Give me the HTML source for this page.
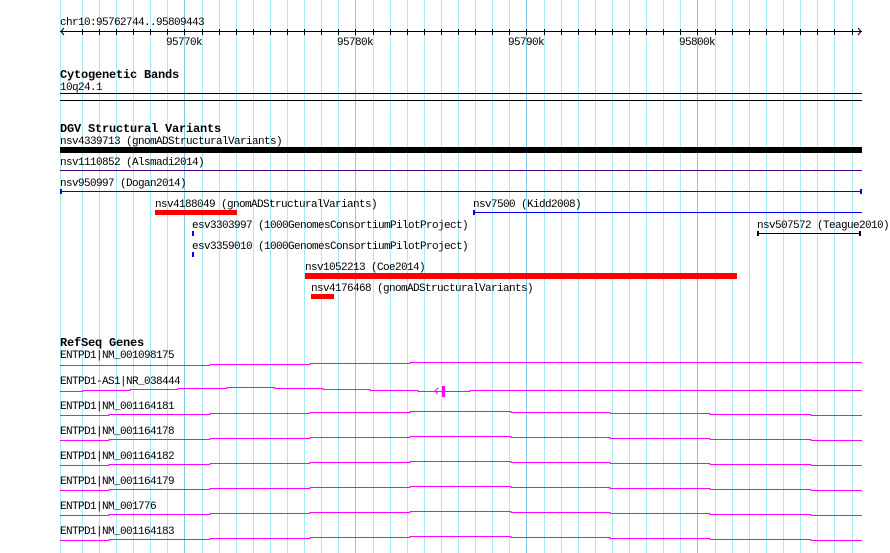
<!DOCTYPE html>
<html><head><meta charset="utf-8"><style>
html,body{margin:0;padding:0;background:#fff;width:890px;height:553px;overflow:hidden}
svg{display:block}
text{font-family:"Liberation Mono",monospace;font-size:11px;letter-spacing:-0.6px;fill:#000}
.b{font-weight:bold;font-size:12px;letter-spacing:-0.2px}
</style></head><body>
<svg width="890" height="553" viewBox="0 0 890 553" xmlns="http://www.w3.org/2000/svg">
<g stroke="#a6ecf0" stroke-width="1" shape-rendering="crispEdges">
<line x1="60.5" y1="0" x2="60.5" y2="553"/>
<line x1="82.5" y1="0" x2="82.5" y2="553"/><line x1="99.5" y1="0" x2="99.5" y2="553"/><line x1="116.5" y1="0" x2="116.5" y2="553"/><line x1="133.5" y1="0" x2="133.5" y2="553"/><line x1="150.5" y1="0" x2="150.5" y2="553"/><line x1="167.5" y1="0" x2="167.5" y2="553"/>
<line x1="202.5" y1="0" x2="202.5" y2="553"/><line x1="219.5" y1="0" x2="219.5" y2="553"/><line x1="236.5" y1="0" x2="236.5" y2="553"/><line x1="253.5" y1="0" x2="253.5" y2="553"/><line x1="270.5" y1="0" x2="270.5" y2="553"/><line x1="287.5" y1="0" x2="287.5" y2="553"/><line x1="304.5" y1="0" x2="304.5" y2="553"/><line x1="321.5" y1="0" x2="321.5" y2="553"/><line x1="338.5" y1="0" x2="338.5" y2="553"/>
<line x1="373.5" y1="0" x2="373.5" y2="553"/><line x1="390.5" y1="0" x2="390.5" y2="553"/><line x1="407.5" y1="0" x2="407.5" y2="553"/><line x1="424.5" y1="0" x2="424.5" y2="553"/><line x1="441.5" y1="0" x2="441.5" y2="553"/><line x1="458.5" y1="0" x2="458.5" y2="553"/><line x1="475.5" y1="0" x2="475.5" y2="553"/><line x1="492.5" y1="0" x2="492.5" y2="553"/><line x1="509.5" y1="0" x2="509.5" y2="553"/>
<line x1="544.5" y1="0" x2="544.5" y2="553"/><line x1="561.5" y1="0" x2="561.5" y2="553"/><line x1="578.5" y1="0" x2="578.5" y2="553"/><line x1="595.5" y1="0" x2="595.5" y2="553"/><line x1="612.5" y1="0" x2="612.5" y2="553"/><line x1="629.5" y1="0" x2="629.5" y2="553"/><line x1="646.5" y1="0" x2="646.5" y2="553"/><line x1="663.5" y1="0" x2="663.5" y2="553"/><line x1="680.5" y1="0" x2="680.5" y2="553"/>
<line x1="715.5" y1="0" x2="715.5" y2="553"/><line x1="732.5" y1="0" x2="732.5" y2="553"/><line x1="749.5" y1="0" x2="749.5" y2="553"/><line x1="766.5" y1="0" x2="766.5" y2="553"/><line x1="783.5" y1="0" x2="783.5" y2="553"/><line x1="800.5" y1="0" x2="800.5" y2="553"/><line x1="817.5" y1="0" x2="817.5" y2="553"/><line x1="834.5" y1="0" x2="834.5" y2="553"/><line x1="852.5" y1="0" x2="852.5" y2="553"/>
</g>
<g stroke="#80c8f0" stroke-width="1" shape-rendering="crispEdges">
<line x1="184.5" y1="0" x2="184.5" y2="553"/><line x1="355.5" y1="0" x2="355.5" y2="553"/><line x1="526.5" y1="0" x2="526.5" y2="553"/><line x1="697.5" y1="0" x2="697.5" y2="553"/>
</g>
<text x="60" y="25">chr10:95762744..95809443</text>
<g stroke="#000" shape-rendering="crispEdges">
<line x1="60" y1="31.5" x2="862" y2="31.5"/>
<line x1="82.5" y1="29" x2="82.5" y2="35"/><line x1="99.5" y1="29" x2="99.5" y2="35"/><line x1="116.5" y1="29" x2="116.5" y2="35"/><line x1="133.5" y1="29" x2="133.5" y2="35"/><line x1="150.5" y1="29" x2="150.5" y2="35"/><line x1="167.5" y1="29" x2="167.5" y2="35"/><line x1="184.5" y1="29" x2="184.5" y2="35"/><line x1="202.5" y1="29" x2="202.5" y2="35"/><line x1="219.5" y1="29" x2="219.5" y2="35"/><line x1="236.5" y1="29" x2="236.5" y2="35"/><line x1="253.5" y1="29" x2="253.5" y2="35"/><line x1="270.5" y1="29" x2="270.5" y2="35"/><line x1="287.5" y1="29" x2="287.5" y2="35"/><line x1="304.5" y1="29" x2="304.5" y2="35"/><line x1="321.5" y1="29" x2="321.5" y2="35"/><line x1="338.5" y1="29" x2="338.5" y2="35"/><line x1="355.5" y1="29" x2="355.5" y2="35"/><line x1="373.5" y1="29" x2="373.5" y2="35"/><line x1="390.5" y1="29" x2="390.5" y2="35"/><line x1="407.5" y1="29" x2="407.5" y2="35"/><line x1="424.5" y1="29" x2="424.5" y2="35"/><line x1="441.5" y1="29" x2="441.5" y2="35"/><line x1="458.5" y1="29" x2="458.5" y2="35"/><line x1="475.5" y1="29" x2="475.5" y2="35"/><line x1="492.5" y1="29" x2="492.5" y2="35"/><line x1="509.5" y1="29" x2="509.5" y2="35"/><line x1="526.5" y1="29" x2="526.5" y2="35"/><line x1="544.5" y1="29" x2="544.5" y2="35"/><line x1="561.5" y1="29" x2="561.5" y2="35"/><line x1="578.5" y1="29" x2="578.5" y2="35"/><line x1="595.5" y1="29" x2="595.5" y2="35"/><line x1="612.5" y1="29" x2="612.5" y2="35"/><line x1="629.5" y1="29" x2="629.5" y2="35"/><line x1="646.5" y1="29" x2="646.5" y2="35"/><line x1="663.5" y1="29" x2="663.5" y2="35"/><line x1="680.5" y1="29" x2="680.5" y2="35"/><line x1="697.5" y1="29" x2="697.5" y2="35"/><line x1="715.5" y1="29" x2="715.5" y2="35"/><line x1="732.5" y1="29" x2="732.5" y2="35"/><line x1="749.5" y1="29" x2="749.5" y2="35"/><line x1="766.5" y1="29" x2="766.5" y2="35"/><line x1="783.5" y1="29" x2="783.5" y2="35"/><line x1="800.5" y1="29" x2="800.5" y2="35"/><line x1="817.5" y1="29" x2="817.5" y2="35"/><line x1="834.5" y1="29" x2="834.5" y2="35"/><line x1="852.5" y1="29" x2="852.5" y2="35"/>
</g>
<polyline points="64,28 61,31.5 64,35" fill="none" stroke="#000"/>
<polyline points="858,28 861,31.5 858,35" fill="none" stroke="#000"/>
<text x="166" y="45">95770k</text><text x="337" y="45">95780k</text><text x="508" y="45">95790k</text><text x="679" y="45">95800k</text>
<text class="b" x="60" y="78">Cytogenetic Bands</text>
<text x="60" y="90">10q24.1</text>
<rect x="60" y="93" width="802" height="1" fill="#000"/>
<rect x="60" y="100" width="802" height="1" fill="#000"/>
<text class="b" x="60" y="132">DGV Structural Variants</text>
<text x="60" y="144">nsv4339713 (gnomADStructuralVariants)</text>
<rect x="60" y="147" width="802" height="6" fill="#000"/>
<text x="60" y="165">nsv1110852 (Alsmadi2014)</text>
<rect x="60" y="170" width="802" height="1" fill="#4b0082"/>
<text x="60" y="186">nsv950997 (Dogan2014)</text>
<rect x="60" y="191" width="802" height="1" fill="#0000ff"/>
<rect x="60" y="189" width="2" height="5" fill="#0000ff"/><rect x="860" y="189" width="2" height="5" fill="#0000ff"/>
<text x="155" y="207">nsv4188049 (gnomADStructuralVariants)</text>
<rect x="155" y="210" width="82" height="5" fill="#ff0000"/>
<text x="473" y="207">nsv7500 (Kidd2008)</text>
<rect x="473" y="212" width="389" height="1" fill="#0000ff"/>
<rect x="473" y="210" width="2" height="5" fill="#0000ff"/>
<text x="192" y="228">esv3303997 (1000GenomesConsortiumPilotProject)</text>
<rect x="192" y="231" width="2" height="5" fill="#0000ff"/>
<text x="757" y="228">nsv507572 (Teague2010)</text>
<rect x="757" y="233" width="104" height="1" fill="#000"/>
<rect x="757" y="231" width="2" height="5" fill="#000"/><rect x="859" y="231" width="2" height="5" fill="#000"/>
<text x="192" y="249">esv3359010 (1000GenomesConsortiumPilotProject)</text>
<rect x="192" y="252" width="2" height="5" fill="#0000ff"/>
<text x="305" y="270">nsv1052213 (Coe2014)</text>
<rect x="305" y="273" width="432" height="6" fill="#ff0000"/>
<text x="311" y="291">nsv4176468 (gnomADStructuralVariants)</text>
<rect x="311" y="294" width="23" height="5" fill="#ff0000"/>
<text class="b" x="60" y="346">RefSeq Genes</text>
<text x="60" y="358">ENTPD1|NM_001098175</text>
<text x="60" y="384">ENTPD1-AS1|NR_038444</text>
<text x="60" y="409">ENTPD1|NM_001164181</text>
<text x="60" y="434">ENTPD1|NM_001164178</text>
<text x="60" y="459">ENTPD1|NM_001164182</text>
<text x="60" y="484">ENTPD1|NM_001164179</text>
<text x="60" y="509">ENTPD1|NM_001776</text>
<text x="60" y="534">ENTPD1|NM_001164183</text>
<defs>
<path id="g" d="M60,0.5 H109 V-0.5 H210 V-1.5 H310 V-2.5 H410 V-3.5 H511 V-2.5 H610 V-1.5 H710 V-0.5 H811 V0.5 H862" fill="none" stroke="#ff00ff" stroke-width="1"/>
</defs>
<g shape-rendering="crispEdges">
<path d="M60,365.5 H210 V364.5 H310 V363.5 H410 V362.5 H862" fill="none" stroke="#ff00ff"/>
<path d="M60,391.5 H83 V390.5 H130 V389.5 H178 V388.5 H227 V387.5 H275 V388.5 H323 V389.5 H370 V390.5 H418 V391.5 H470 V390.5 H862" fill="none" stroke="#ff00ff"/>
<rect x="442" y="386" width="3" height="11" fill="#ff00ff"/>
<polyline points="438,388 435,391 438,394" fill="none" stroke="#ff00ff"/>
<use href="#g" y="415"/>
<use href="#g" y="440"/>
<use href="#g" y="465"/>
<use href="#g" y="490"/>
<use href="#g" y="515"/>
<use href="#g" y="540"/>
</g>
</svg>
</body></html>
